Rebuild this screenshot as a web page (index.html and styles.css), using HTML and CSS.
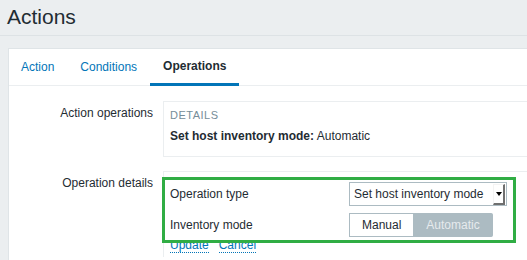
FILE: index.html
```html
<!DOCTYPE html>
<html>
<head>
<meta charset="utf-8">
<link rel="stylesheet" href="styles.css">
</head>
<body>
<div class="header"><h1>Actions</h1></div>
<div class="panel">
  <ul class="tabs">
    <li class="tab">Action</li>
    <li class="tab">Conditions</li>
    <li class="tab active">Operations</li>
  </ul>
  <div class="form">
    <div class="form-row">
      <div class="label">Action operations</div>
      <div class="details">
        <div class="details-head">DETAILS</div>
        <div class="details-text"><b>Set host inventory mode:</b> Automatic</div>
      </div>
    </div>
    <div class="form-row">
      <div class="label">Operation details</div>
      <div class="opbox">
        <div class="op-grid">
          <div class="op-label">Operation type</div>
          <div class="select"><span class="select-text">Set host inventory mode</span><span class="select-btn"><span class="tri"></span></span></div>
          <div class="op-label">Inventory mode</div>
          <div class="radio"><span class="seg">Manual</span><span class="seg on">Automatic</span></div>
        </div>
        <div class="links"><a class="link">Update</a><a class="link">Cancel</a></div>
        <div class="highlight"></div>
      </div>
    </div>
  </div>
</div>
</body>
</html>
```
FILE: styles.css
```css
html, body {
  margin: 0;
  padding: 0;
}
* {
  box-sizing: border-box;
}
body {
  background: #ebeef0;
  font-family: "Liberation Sans", Arial, sans-serif;
  font-size: 12px;
  color: #1f2c33;
  width: 527px;
  height: 260px;
  overflow: hidden;
}
.header {
  height: 36px;
  border-bottom: 1px solid #dde2e5;
  padding-left: 7px;
  padding-bottom: 1px;
  display: flex;
  align-items: center;
  margin-bottom: 12px;
}
.header h1 {
  margin: 0;
  font-size: 21px;
  font-weight: normal;
  color: #1f2c33;
}
.panel {
  margin-left: 8px;
  width: calc(100% - 8px);
  height: 212px;
  overflow: hidden;
  background: #fff;
  border: 1px solid #dfe4e7;
  border-right: none;
  border-bottom: none;
}
.tabs {
  list-style: none;
  margin: 0 0 0 -1px;
  padding: 0;
  display: flex;
  align-items: flex-start;
  height: 37px;
  border-bottom: 1px solid #ebeef0;
}
.tab {
  padding: 0 13px;
  line-height: 36px;
  color: #0275b8;
}
.tab.active {
  color: #1f2c33;
  font-weight: bold;
  line-height: 34px;
  border-bottom: 3px solid #0275b8;
  height: 37px;
}
.form {
  padding-top: 15px;
  display: flex;
  flex-direction: column;
  gap: 14px;
}
.form-row {
  display: grid;
  grid-template-columns: 154px 1fr;
}
.label {
  text-align: right;
  padding-right: 10px;
  line-height: 24px;
}
.details {
  border: 1px solid #ebeef0;
  border-right: none;
  padding: 6px 6px 11px;
}
.details-head {
  font-size: 11px;
  line-height: 14px;
  letter-spacing: 0.5px;
  color: #768d99;
  margin-bottom: 5px;
}
.details-text {
  line-height: 18px;
}
.opbox {
  position: relative;
  border: 1px solid #ebeef0;
  border-right: none;
  border-bottom: none;
  padding: 10px 6px 4px;
}
.op-grid {
  display: grid;
  grid-template-columns: 179px auto;
  row-gap: 7px;
  align-items: center;
  justify-content: start;
}
.op-label {
  line-height: 24px;
}
.select {
  display: flex;
  align-items: center;
  width: 158px;
  height: 24px;
  border: 1px solid #acbbc2;
  background: #fff;
  padding-left: 4px;
}
.select-text {
  flex: 1;
}
.select-btn {
  width: 12px;
  height: 21px;
  margin-right: 1px;
  border-top: 1px solid #f4f4f4;
  border-left: 1px solid #f4f4f4;
  border-right: 2px solid #6f6f6f;
  border-bottom: 2px solid #6f6f6f;
  display: flex;
  align-items: center;
  justify-content: center;
}
.tri {
  width: 0;
  height: 0;
  border-left: 3px solid transparent;
  border-right: 3px solid transparent;
  border-top: 4px solid #000;
}
.radio {
  display: flex;
  height: 24px;
}
.seg {
  padding: 0 12px;
  line-height: 22px;
  border: 1px solid #acbbc2;
}
.seg.on {
  background: #acbbc2;
  color: #e6eaed;
  border-left: none;
  border-radius: 0 2px 2px 0;
}
.links {
  margin-top: 1px;
  line-height: 14px;
  display: flex;
  gap: 10px;
}
.link {
  color: #0275b8;
  border-bottom: 1px dotted #0275b8;
}
.highlight {
  position: absolute;
  left: -2px;
  top: 5px;
  width: 354px;
  height: 66px;
  border: 3px solid #30ad44;
}
```
